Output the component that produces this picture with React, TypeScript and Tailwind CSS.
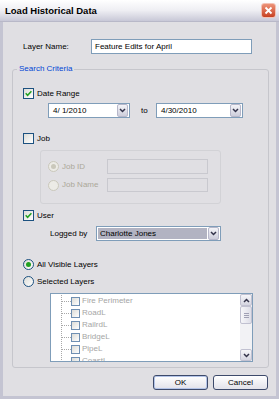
import type { ReactNode } from "react";

function Check({ checked }: { checked?: boolean }) {
  return (
    <span className="flex h-[11px] w-[11px] shrink-0 items-center justify-center border border-[#1c5180] bg-linear-to-br from-[#dcdcd7] to-white">
      {checked && (
        <svg width="7" height="7" viewBox="0 0 7 7">
          <path d="M0.7 3.3 L2.6 5.3 L6.4 1.3" stroke="#21a121" strokeWidth="1.5" fill="none" />
        </svg>
      )}
    </span>
  );
}

function Radio({ checked, disabled }: { checked?: boolean; disabled?: boolean }) {
  return (
    <span
      className={
        disabled
          ? "flex h-[11px] w-[11px] shrink-0 items-center justify-center rounded-full border border-[#cac8bb] bg-[#ecebe6]"
          : "flex h-[11px] w-[11px] shrink-0 items-center justify-center rounded-full border border-[#1c5180] bg-linear-to-br from-[#dcdcd7] to-white"
      }
    >
      {checked && (
        <span
          className={
            disabled
              ? "h-[5px] w-[5px] rounded-full bg-[#cac8bb]"
              : "h-[5px] w-[5px] rounded-full bg-[#21a121]"
          }
        />
      )}
    </span>
  );
}

function Arrow({ up }: { up?: boolean }) {
  return (
    <svg width="7" height="5" viewBox="0 0 7 5">
      <path
        d={up ? "M1 4 L3.5 1.5 L6 4" : "M1 1 L3.5 3.5 L6 1"}
        stroke="#33334a"
        strokeWidth="1.5"
        fill="none"
      />
    </svg>
  );
}

function DropButton() {
  return (
    <span className="mr-px flex h-[13px] w-[11px] shrink-0 items-center justify-center rounded-[2px] border border-[#b7b7ca] bg-linear-to-b from-[#f4f4f8] to-[#cdcddb]">
      <Arrow />
    </span>
  );
}

function Combo({ width, children }: { width: string; children: ReactNode }) {
  return (
    <div className={`flex h-[15px] ${width} items-center border border-[#7f9db9] bg-white`}>
      <span className="flex-1 pl-[4px]">{children}</span>
      <DropButton />
    </div>
  );
}

function Button({ label, primary }: { label: string; primary?: boolean }) {
  return (
    <div
      className={
        primary
          ? "flex h-[15px] w-[55px] items-center justify-center rounded-[3px] border border-[#3d4a6b] bg-linear-to-b from-white to-[#e2e2ea] shadow-[inset_0_0_0_1px_#b4c4e8]"
          : "flex h-[15px] w-[55px] items-center justify-center rounded-[3px] border border-[#3d4a6b] bg-linear-to-b from-white to-[#e2e2ea]"
      }
    >
      {label}
    </div>
  );
}

const layers = ["Fire Perimeter", "RoadL", "RailrdL", "BridgeL", "PipeL", "CoastL"];

export default function App() {
  return (
    <div className="flex h-[399px] w-[279px] flex-col bg-[#c4c4d2] font-['Liberation_Sans',Arial,sans-serif] text-[8px] leading-none text-black">
      <div className="flex h-[22px] shrink-0 items-center justify-between border-b border-[#b8b8c8] bg-linear-to-b from-white via-[#eeeef3] to-[#c8c8d7] pl-[5px] pr-[3px]">
        <span className="text-[9.5px] font-bold">Load Historical Data</span>
        <span className="flex h-[15px] w-[15px] items-center justify-center rounded-[3px] border border-[#f3c1b4] bg-linear-to-b from-[#ec9278] to-[#c73f1e]">
          <svg width="9" height="9" viewBox="0 0 9 9">
            <path d="M1.5 1.5 L7.5 7.5 M7.5 1.5 L1.5 7.5" stroke="white" strokeWidth="1.8" />
          </svg>
        </span>
      </div>

      <div className="mx-[3px] mb-[3px] flex flex-1 flex-col bg-[#e0dfe3]">
        <div className="mt-[17px] flex h-[15px] items-center pl-[20px]">
          <span className="w-[68px]">Layer Name:</span>
          <div className="flex h-[15px] w-[161px] items-center border border-[#7f9db9] bg-white pl-[3px]">
            Feature Edits for April
          </div>
        </div>

        <div className="relative ml-[9px] mt-[15px] h-[299px] w-[257px] rounded-[3px] border border-[#c6c6cc]">
          <span className="absolute left-[4px] top-[-5px] bg-[#e0dfe3] px-[2px] text-[#0046d5]">
            Search Criteria
          </span>

          <div className="mt-[18px] flex h-[11px] items-center gap-[3px] pl-[10px]">
            <Check checked />
            <span>Date Range</span>
          </div>

          <div className="mt-[4px] flex h-[15px] items-center pl-[35px]">
            <Combo width="w-[82px]">4/ 1/2010</Combo>
            <span className="w-[26px] pl-[11px]">to</span>
            <Combo width="w-[87px]">4/30/2010</Combo>
          </div>

          <div className="mt-[15px] flex h-[11px] items-center gap-[3px] pl-[10px]">
            <Check />
            <span>Job</span>
          </div>

          <div className="ml-[27px] mt-[6px] h-[54px] w-[181px] rounded-[3px] border border-[#d2d2d6]">
            <div className="mt-[8px] flex h-[15px] items-center pl-[7px]">
              <span className="flex w-[59px] items-center gap-[3px] text-[#aca899]">
                <Radio checked disabled />
                Job ID
              </span>
              <div className="h-[15px] w-[101px] border border-[#c9c9cf]" />
            </div>
            <div className="mt-[4px] flex h-[14px] items-center pl-[7px]">
              <span className="flex w-[59px] items-center gap-[3px] text-[#aca899]">
                <Radio disabled />
                Job Name
              </span>
              <div className="h-[14px] w-[101px] border border-[#c9c9cf]" />
            </div>
          </div>

          <div className="mt-[6px] flex h-[11px] items-center gap-[3px] pl-[10px]">
            <Check checked />
            <span>User</span>
          </div>

          <div className="mt-[5px] flex h-[15px] items-center pl-[37px]">
            <span className="w-[46px]">Logged by</span>
            <div className="flex h-[15px] w-[125px] items-center border border-[#7f9db9] bg-white">
              <span className="mx-px flex h-[11px] flex-1 items-center bg-[#b2b3c2] pl-[2px]">
                Charlotte Jones
              </span>
              <DropButton />
            </div>
          </div>

          <div className="mt-[18px] flex h-[11px] items-center gap-[3px] pl-[10px]">
            <Radio checked />
            <span>All Visible Layers</span>
          </div>

          <div className="mt-[6px] flex h-[11px] items-center gap-[3px] pl-[10px]">
            <Radio />
            <span>Selected Layers</span>
          </div>

          <div className="ml-[37px] mt-[6px] flex h-[69px] w-[203px] border border-[#7f9db9] bg-white">
            <div className="flex-1 overflow-hidden pl-[10px] pt-px">
              {layers.map((name) => (
                <div key={name} className="flex h-[12px] items-center">
                  <svg width="10" height="12" viewBox="0 0 10 12" className="shrink-0">
                    <path d="M0.5 0 V12 M1 6.5 H10" stroke="#a8a8a8" strokeDasharray="1 1" />
                  </svg>
                  <span className="h-[9px] w-[9px] shrink-0 border border-[#6f8fb2] bg-linear-to-br from-[#dcdcd7] to-white" />
                  <span className="ml-[2px] text-[#a5a5a5]">{name}</span>
                </div>
              ))}
            </div>
            <div className="flex w-[12px] flex-col bg-[#f2f2f5]">
              <span className="flex h-[12px] items-center justify-center rounded-[2px] border border-[#c1c1d1] bg-linear-to-b from-[#f6f6f9] to-[#d5d5e1]">
                <Arrow up />
              </span>
              <span className="flex h-[18px] flex-col items-center justify-center gap-px rounded-[2px] border border-[#c1c1d1] bg-linear-to-r from-[#f6f6f9] to-[#dedee8]">
                <span className="h-px w-[5px] bg-[#a0a0b4]" />
                <span className="h-px w-[5px] bg-[#a0a0b4]" />
                <span className="h-px w-[5px] bg-[#a0a0b4]" />
              </span>
              <span className="flex-1" />
              <span className="flex h-[12px] items-center justify-center rounded-[2px] border border-[#c1c1d1] bg-linear-to-b from-[#f6f6f9] to-[#d5d5e1]">
                <Arrow />
              </span>
            </div>
          </div>
        </div>

        <div className="mt-[7px] flex justify-end gap-[5px] pr-[8px]">
          <Button label="OK" primary />
          <Button label="Cancel" />
        </div>
      </div>
    </div>
  );
}
